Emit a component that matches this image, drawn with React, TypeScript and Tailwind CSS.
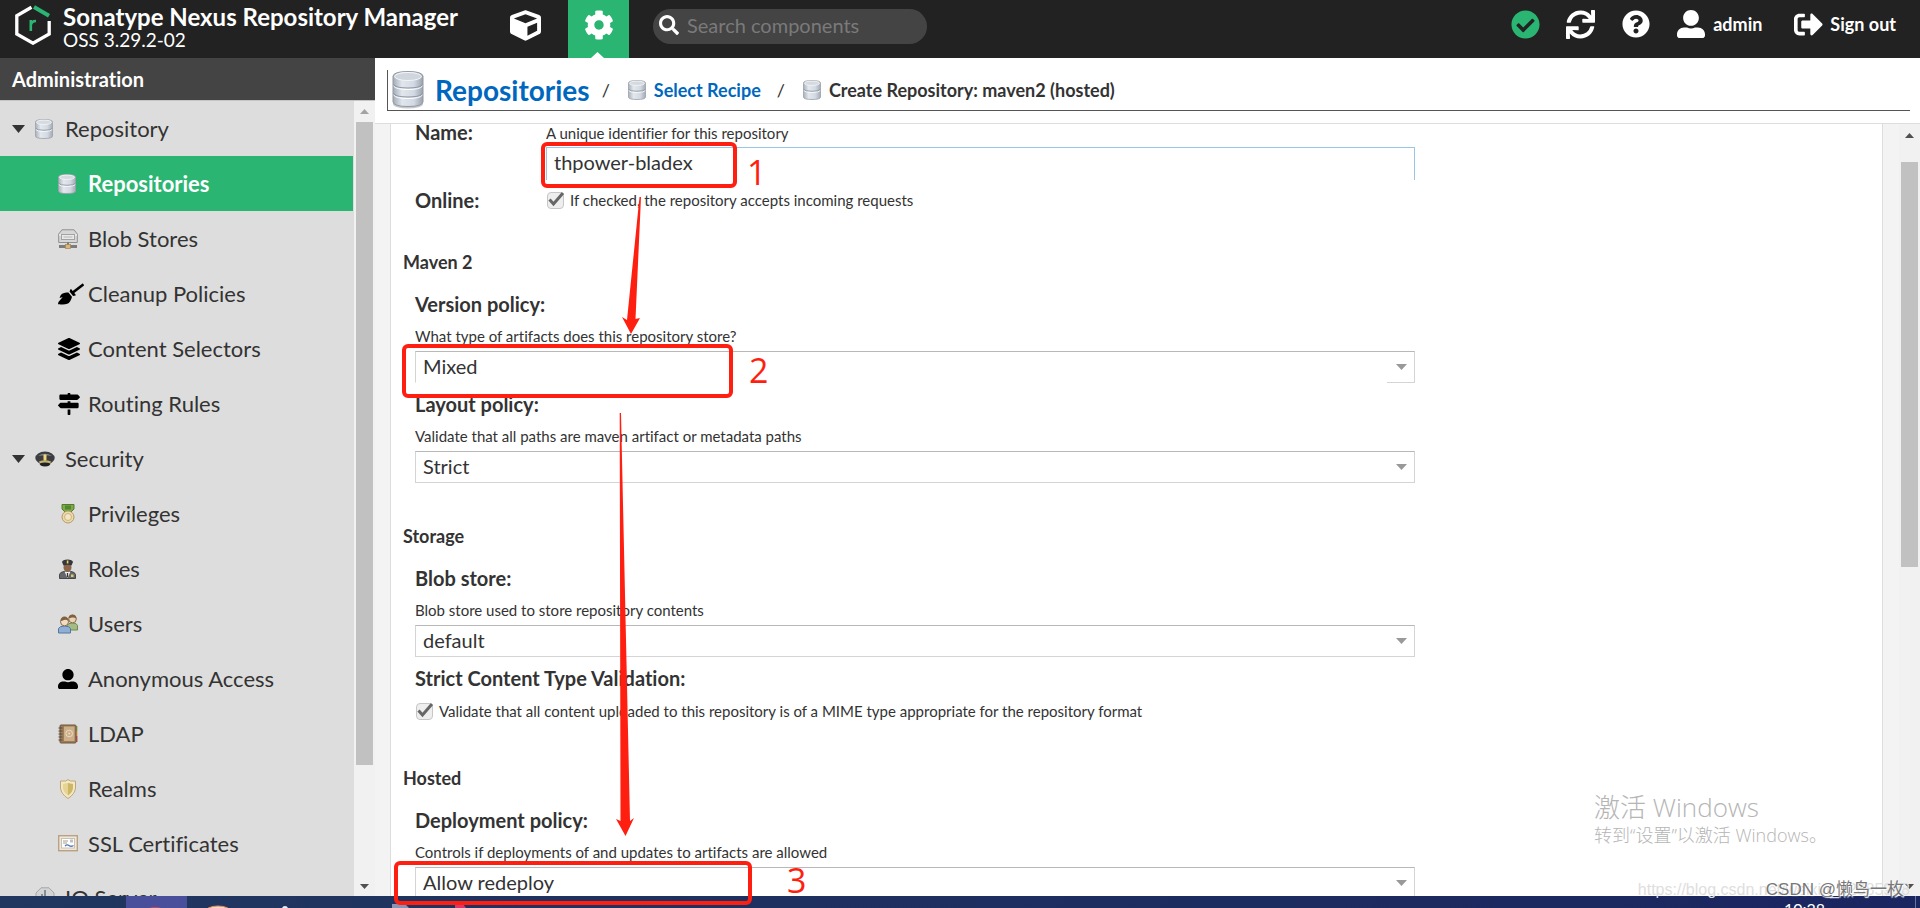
import { useId, useState } from "react";
import type { ReactNode } from "react";
import {
    FaBroom,
    FaCheckCircle,
    FaCog,
    FaCube,
    FaLayerGroup,
    FaMapSigns,
    FaQuestionCircle,
    FaSearch,
    FaSignOutAlt,
    FaSync,
    FaUserAlt,
} from "react-icons/fa";

/* ---------- Icons ---------- */

function DiskIcon({ className }: { className: string }) {
    const id = useId();
    return (
        <svg viewBox="0 0 18 20" className={className} preserveAspectRatio="none" aria-hidden="true">
            <defs>
                <linearGradient id={id} x1="0" x2="1" y1="0" y2="0">
                    <stop offset="0" stopColor="#a9b1bb" />
                    <stop offset="0.3" stopColor="#e3e8ee" />
                    <stop offset="0.7" stopColor="#d3d9e2" />
                    <stop offset="1" stopColor="#a4abb5" />
                </linearGradient>
            </defs>
            <path d="M.5 3Q.5.5 9 .5T17.500 3V17Q17.500 19.500 9 19.500T.5 17Z" fill={`url(#${id})`} stroke="#9ba1a9" strokeWidth="0.8" />
            <path d="M.8 9.500Q2 11.300 9 11.300T17.200 9.500" fill="none" stroke="#8f98a3" />
            <path d="M.8 10.700Q2 12.400 9 12.400T17.200 10.700" fill="none" stroke="#fff" strokeWidth="0.8" />
            <ellipse cx="9" cy="3.300" rx="7.600" ry="2.200" fill="#d5dae0" stroke="#f4f6f8" strokeWidth="0.8" />
        </svg>
    );
}

function BigDiskIcon({ className }: { className: string }) {
    const id = useId();
    return (
        <svg viewBox="0 0 32 38" className={className} aria-hidden="true">
            <defs>
                <linearGradient id={id} x1="0" x2="1" y1="0" y2="0">
                    <stop offset="0" stopColor="#a2abb8" />
                    <stop offset="0.3" stopColor="#e2e6ed" />
                    <stop offset="0.7" stopColor="#d3d9e3" />
                    <stop offset="1" stopColor="#99a1ad" />
                </linearGradient>
            </defs>
            <ellipse cx="16" cy="33" rx="15" ry="4.500" fill="#c9c9c9" />
            <path d="M1 5Q2 .5 16 .5T31 5V31Q30 35.500 16 35.500T1 31Z" fill={`url(#${id})`} stroke="#9299a3" />
            <path d="M1.500 13.500Q4 17 16 17T30.500 13.500M1.500 22.500Q4 26 16 26T30.500 22.500" fill="none" stroke="#8d96a3" strokeWidth="1.200" />
            <path d="M1.500 15Q4 18.500 16 18.500T30.500 15M1.500 24Q4 27.500 16 27.500T30.500 24" fill="none" stroke="#fff" />
            <ellipse cx="16" cy="5.500" rx="13.500" ry="4" fill="#cfd6dd" stroke="#f3f5f7" />
        </svg>
    );
}

function BlobIcon() {
    return (
        <svg viewBox="0 0 20 20" className="size-5" aria-hidden="true">
            <path d="M4 .8H16L19.300 5V13.500H.7V5Z" fill="#d6d6d6" stroke="#909090" />
            <path d="M1 6H19" stroke="#fff" />
            <rect x="3.500" y="5.500" width="13" height="5" fill="#e9e9e9" stroke="#a2a2a2" />
            <path d="M5.500 8H14.500" stroke="#b5b5b5" />
            <path d="M10 13.500V17" stroke="#777" strokeWidth="2" />
            <path d="M1 17.500H19" stroke="#7c7c7c" strokeWidth="3" />
            <rect x="7.500" y="15.500" width="5" height="4" fill="#d9b77c" stroke="#a48350" strokeWidth="0.7" />
        </svg>
    );
}

function CapIcon() {
    return (
        <svg viewBox="0 0 20 16" className="w-5 h-4" aria-hidden="true">
            <ellipse cx="10" cy="7" rx="9.700" ry="6.500" fill="#3c3d40" />
            <path d="M3 5Q10 .5 17 5Q10 3.500 3 5" fill="#8b8b8b" />
            <path d="M4 10.500Q10 8 16 10.500L15 13Q10 11 5 13Z" fill="#c5b372" />
            <path d="M4.500 12.500Q10 10.500 15.500 12.500Q15 15.500 10 15.500T4.500 12.500" fill="#222" />
            <rect x="8.500" y="3.500" width="3" height="6" rx="1" fill="#f0d878" />
        </svg>
    );
}

function MedalIcon() {
    return (
        <svg viewBox="0 0 20 20" className="size-5" aria-hidden="true">
            <path d="M4 .5H16V5L13 8H7L4 5Z" fill="#7fa84a" stroke="#557a2b" />
            <rect x="7" y="1.500" width="6" height="4" fill="#4c8a2c" />
            <circle cx="10" cy="13" r="6" fill="#ead9ad" stroke="#b89a66" />
            <circle cx="10" cy="13" r="3.500" fill="#f3e6c3" stroke="#cdb37d" />
        </svg>
    );
}

function RoleIcon() {
    return (
        <svg viewBox="0 0 20 20" className="size-5" aria-hidden="true">
            <path d="M1.500 19.500V15.500Q2 13 6 12.500H13Q17 13 17.500 15.500V19.500Z" fill="#65676b" stroke="#46474a" />
            <path d="M6.500 12.500 9.500 19 12.500 12.500Z" fill="#f0f0f0" />
            <path d="M8.800 14H10.200L10 18H9Z" fill="#333" />
            <ellipse cx="9.500" cy="8.500" rx="4" ry="4.500" fill="#8a6549" />
            <path d="M4 3Q4.500.5 9.500.5T15 3L13.500 6.500Q9.500 5 5.500 6.500Z" fill="#35373b" />
            <rect x="8.800" y="1.500" width="1.600" height="3" fill="#e8cf66" />
            <rect x="13" y="15.500" width="2.500" height="2.500" fill="#e5c95b" />
        </svg>
    );
}

function UsersIcon() {
    return (
        <svg viewBox="0 0 20 20" className="size-5" aria-hidden="true">
            <path d="M9 16V11.500Q10 9 14.500 9T19.500 11.500V16Z" fill="#a3bb85" stroke="#6f8a50" />
            <circle cx="14.500" cy="5" r="3.800" fill="#ecd3b5" stroke="#8b6c4d" />
            <path d="M10.500 4Q11 .5 14.500.5T18.500 4.500Q16 3 14 3.500T10.500 4" fill="#80603f" />
            <path d="M.5 19V14.500Q1.500 12 6.500 12T12.500 14.500V19Z" fill="#8fb0d4" stroke="#5577a0" />
            <circle cx="6.500" cy="7.800" r="4" fill="#f2dcc2" stroke="#8b6c4d" />
            <path d="M2.500 7Q3 2.500 6.500 2.500T10.800 7Q8 5 6 6T2.500 7" fill="#80603f" />
        </svg>
    );
}

function BookIcon() {
    return (
        <svg viewBox="0 0 20 20" className="size-5" aria-hidden="true">
            <rect x="17" y="2" width="2.500" height="5" fill="#8bab5c" />
            <rect x="17" y="7" width="2.500" height="5" fill="#e0a05a" />
            <rect x="17" y="12" width="2.500" height="6" fill="#b8564a" />
            <rect x="2" y="1" width="16" height="18" rx="1" fill="#9b7d5c" stroke="#705539" />
            <rect x="6" y="2.500" width="10.500" height="14.500" fill="#cdb08a" />
            <circle cx="11.200" cy="9.500" r="3.300" fill="none" stroke="#eadcc3" />
            <circle cx="11.200" cy="9.500" r="1" fill="#eadcc3" />
            <path d="M.5 4H4.500M.5 7H4.500M.5 10H4.500M.5 13H4.500M.5 16H4.500" stroke="#5b4a38" />
        </svg>
    );
}

function ShieldIcon() {
    return (
        <svg viewBox="0 0 20 20" className="size-5" aria-hidden="true">
            <path d="M10 .6 12.500 2H17.500V9Q17 15 10 19.500Q3 15 2.500 9V2H7.500Z" fill="#f3e8c4" stroke="#bfa677" />
            <path d="M10 4V16.500Q5 13 5 8.500V5Z" fill="#e5d493" />
            <path d="M10 4V16.500Q15 13 15 8.500V5Z" fill="#cdb766" />
        </svg>
    );
}

function CertificateIcon() {
    return (
        <svg viewBox="0 0 20 17" className="w-5 h-[17px]" aria-hidden="true">
            <rect x="0.700" y="0.700" width="18.600" height="15" fill="#efe8da" stroke="#b9a283" strokeWidth="1.400" />
            <rect x="3.500" y="3.500" width="13" height="9.500" fill="#fff" stroke="#c9c2b2" />
            <path d="M5 6H10M5 8H9" stroke="#a59e90" />
            <rect x="12" y="4.500" width="3" height="3" fill="#b9c2c9" />
            <path d="M7 11Q9 9 11 10.500T15.500 10.500" fill="none" stroke="#5a75b5" strokeWidth="1.300" />
        </svg>
    );
}

function ServerIcon() {
    return (
        <svg viewBox="0 0 20 20" className="size-5" aria-hidden="true">
            <path d="M6 .8H14L19 6V14L14 19H6L1 14V6Z" fill="#d2d4d6" stroke="#a4a6a8" />
            <path d="M10 3V15M7 7V15" stroke="#8a8d90" strokeWidth="2" />
        </svg>
    );
}

function Logo() {
    return (
        <svg viewBox="0 0 36 40" className="w-9 h-10 shrink-0" aria-hidden="true">
            <path d="M16.500 2.300 1.800 10.800V29L18 38.200 34.200 29V16" fill="none" stroke="#fff" strokeWidth="3.300" />
            <path d="M19 2 34 10.800" stroke="#2ab573" strokeWidth="4" />
            <path d="M15.800 26V15M15.800 20Q16.500 16 21 16" fill="none" stroke="#2ab573" strokeWidth="2.600" />
        </svg>
    );
}

/* ---------- Sidebar ---------- */

type NavItem = { label: string; icon: ReactNode; active?: boolean };

const navGroups: { label: string; icon: ReactNode; items: NavItem[] }[] = [
    {
        label: "Repository",
        icon: <DiskIcon className="w-[18px] h-5" />,
        items: [
            { label: "Repositories", icon: <DiskIcon className="w-[18px] h-5" />, active: true },
            { label: "Blob Stores", icon: <BlobIcon /> },
            { label: "Cleanup Policies", icon: <FaBroom size={26} className="shrink-0 text-black" /> },
            { label: "Content Selectors", icon: <FaLayerGroup size={22} className="shrink-0 text-black" /> },
            { label: "Routing Rules", icon: <FaMapSigns size={22} className="shrink-0 text-black" /> },
        ],
    },
    {
        label: "Security",
        icon: <CapIcon />,
        items: [
            { label: "Privileges", icon: <MedalIcon /> },
            { label: "Roles", icon: <RoleIcon /> },
            { label: "Users", icon: <UsersIcon /> },
            { label: "Anonymous Access", icon: <FaUserAlt size={20} className="text-black" /> },
            { label: "LDAP", icon: <BookIcon /> },
            { label: "Realms", icon: <ShieldIcon /> },
            { label: "SSL Certificates", icon: <CertificateIcon /> },
        ],
    },
    { label: "IQ Server", icon: <ServerIcon />, items: [] },
];

function Triangle({ up, className }: { up?: boolean; className: string }) {
    return (
        <svg viewBox="0 0 10 6" preserveAspectRatio="none" className={className} aria-hidden="true">
            <path d={up ? "M0 6 5 0 10 6Z" : "M0 0H10L5 6Z"} fill="currentColor" />
        </svg>
    );
}

function Sidebar() {
    return (
        <aside className="w-[375px] shrink-0 flex flex-col bg-[#ddd]">
            <h2 className="h-[42px] shrink-0 flex items-center px-3 bg-[#444] text-white text-[20px] font-bold">Administration</h2>
            <div className="flex-1 min-h-0 flex border-t border-[#c4c4c4]">
                <nav className="flex-1 overflow-hidden text-[22px] text-[#333]">
                    {navGroups.map((group) => (
                        <div key={group.label}>
                            <a href="#" className={group.items.length > 0 ? "h-[55px] pl-3 flex items-center" : "h-[52px] pl-3 flex items-center"}>
                                {group.items.length > 0 ? <Triangle className="w-[13px] h-2" /> : <span className="w-[13px]" />}
                                <span className="w-10 pl-[10px] flex items-center">{group.icon}</span>
                                {group.label}
                            </a>
                            {group.items.map((item) => (
                                <a
                                    key={item.label}
                                    href="#"
                                    className={
                                        item.active
                                            ? "h-[55px] mr-px pl-[58px] flex items-center bg-[#2ab573] text-white font-bold"
                                            : "h-[55px] pl-[58px] flex items-center"
                                    }
                                >
                                    <span className="w-[30px] shrink-0 flex items-center">{item.icon}</span>
                                    {item.label}
                                </a>
                            ))}
                        </div>
                    ))}
                </nav>
                <div className="w-[21px] shrink-0 flex flex-col items-center bg-[#f1f1f1]" aria-hidden="true">
                    <div className="h-[21px] flex items-center"><Triangle up className="w-[9px] h-[5px] text-[#a3a3a3]" /></div>
                    <div className="w-[17px] h-[643px] bg-[#c1c1c1]" />
                    <div className="mt-auto h-5 flex items-center"><Triangle className="w-[9px] h-[5px] text-[#505050]" /></div>
                </div>
            </div>
        </aside>
    );
}

/* ---------- Header ---------- */

function Header() {
    return (
        <header className="h-[58px] shrink-0 flex bg-[#222] text-white">
            <div className="w-[490px] pl-[15px] pt-[5px] flex gap-3">
                <Logo />
                <div>
                    <h1 className="text-[24px] leading-6 font-bold whitespace-nowrap">Sonatype Nexus Repository Manager</h1>
                    <p className="text-[19px] leading-[22px]">OSS 3.29.2-02</p>
                </div>
            </div>
            <button type="button" aria-label="Browse" className="w-[78px] pl-5 pb-2 flex items-center"><FaCube size={31} /></button>
            <button type="button" aria-label="Administration" className="relative w-[61px] pb-[9px] flex items-center justify-center bg-[#2ab573]">
                <FaCog size={30} />
                <Triangle up className="absolute bottom-0 left-[23px] w-[13px] h-[6px]" />
            </button>
            <label className="ml-6 mt-[9px] w-[274px] h-[35px] pl-[6px] pb-1 flex items-center gap-2 rounded-full bg-[#444]">
                <FaSearch size={20} className="shrink-0" />
                <input type="search" aria-label="Search components" placeholder="Search components" className="w-full min-w-0 bg-transparent text-[20px] outline-none placeholder:text-[#7a7a7a]" />
            </label>
            <div className="ml-auto h-12 pr-6 flex items-center text-[18px] font-bold whitespace-nowrap">
                <button type="button" aria-label="System status" className="mr-[26px] text-[#2ab573]"><FaCheckCircle size={29} /></button>
                <button type="button" aria-label="Refresh" className="mr-[27px]"><FaSync size={29} /></button>
                <button type="button" aria-label="Help" className="mr-[27px]"><FaQuestionCircle size={28} /></button>
                <button type="button" className="mr-8 flex items-center gap-2"><FaUserAlt size={28} />admin</button>
                <button type="button" className="flex items-center gap-[7px]"><FaSignOutAlt size={29} />Sign out</button>
            </div>
        </header>
    );
}

/* ---------- Form ---------- */

function Breadcrumb() {
    return (
        <div className="h-[66px] shrink-0 pt-3 pl-3 pr-[10px] bg-white border-b border-[#ddd]">
            <nav className="h-[41px] pl-1 flex items-center border-l border-b border-[#555] text-[18px] font-bold">
                <BigDiskIcon className="w-8 h-[38px]" />
                <a href="#" className="ml-[11px] text-[28px] text-[#0067bf]">Repositories</a>
                <span className="ml-3 mr-[18px] font-normal">/</span>
                <DiskIcon className="w-[18px] h-5" />
                <a href="#" className="ml-2 text-[#0067bf]">Select Recipe</a>
                <span className="ml-4 mr-[18px] font-normal">/</span>
                <DiskIcon className="w-[18px] h-5" />
                <span className="ml-2">Create Repository: maven2 (hosted)</span>
            </nav>
        </div>
    );
}

type SelectFieldProps = { id: string; label: string; help: string; options: string[]; openBottom?: boolean };

function SelectField({ id, label, help, options, openBottom }: SelectFieldProps) {
    return (
        <div className="ml-3">
            <label htmlFor={id} className="block leading-6 text-[20px] font-bold">{label}</label>
            <p className="mt-[10px] leading-5 text-[15px]">{help}</p>
            <div className="relative mt-[5px] h-8">
                <select
                    id={id}
                    className={
                        openBottom
                            ? "w-full h-8 pl-[7px] pr-8 pb-0.5 appearance-none bg-white text-[20px] leading-6 border border-[#d4d4d4] border-t-[#b8b8b8] border-b-transparent outline-none"
                            : "w-full h-8 pl-[7px] pr-8 pb-0.5 appearance-none bg-white text-[20px] leading-6 border border-[#d4d4d4] border-t-[#b8b8b8] outline-none"
                    }
                >
                    {options.map((o) => <option key={o}>{o}</option>)}
                </select>
                <span className="absolute right-0 bottom-0 w-7 h-8 flex items-center justify-center border-b border-[#d4d4d4] pointer-events-none">
                    <Triangle className="w-[11px] h-[6px] text-[#999]" />
                </span>
            </div>
        </div>
    );
}

function CheckField({ id, text }: { id: string; text: string }) {
    const [checked, setChecked] = useState(true);
    return (
        <label htmlFor={id} className="h-5 flex items-center gap-[5px] text-[15px]">
            <span className="relative size-[19px] shrink-0">
                <input
                    id={id}
                    type="checkbox"
                    checked={checked}
                    onChange={() => setChecked(!checked)}
                    className="block size-[17px] mt-px ml-px appearance-none rounded-sm border border-[#c6c6c6] bg-[#eee]"
                />
                {checked && (
                    <svg viewBox="0 0 19 19" className="absolute inset-0 size-[19px] pointer-events-none" aria-hidden="true">
                        <path d="M3.500 8.500 7.500 13 17 2" fill="none" stroke="#666" strokeWidth="3" />
                    </svg>
                )}
            </span>
            {text}
        </label>
    );
}

function RepositoryForm() {
    return (
        <form className="-mt-1 pl-3 w-full max-w-[1024px]">
            <div className="ml-3 flex">
                <label htmlFor="name" className="w-[131px] shrink-0 leading-6 text-[20px] font-bold">Name:</label>
                <div className="flex-1">
                    <p className="pt-[3px] leading-5 text-[15px]">A unique identifier for this repository</p>
                    <input
                        id="name"
                        type="text"
                        defaultValue="thpower-bladex"
                        className="mt-1 block w-full h-[33px] px-[7px] pb-1 bg-white text-[20px] border-x border-t border-[#97c6e6] outline-none"
                    />
                </div>
            </div>
            <div className="ml-3 mt-2 flex items-center">
                <span className="w-[131px] shrink-0 leading-6 text-[20px] font-bold">Online:</span>
                <CheckField id="online" text="If checked, the repository accepts incoming requests" />
            </div>

            <h3 className="mt-[38px] mb-[18px] leading-6 text-[18px] font-bold">Maven 2</h3>
            <div className="flex flex-col gap-[9px]">
                <SelectField id="version" label="Version policy:" help="What type of artifacts does this repository store?" options={["Mixed", "Release", "Snapshot"]} openBottom />
                <SelectField id="layout" label="Layout policy:" help="Validate that all paths are maven artifact or metadata paths" options={["Strict", "Permissive"]} />
            </div>

            <h3 className="mt-[41px] mb-[18px] leading-6 text-[18px] font-bold">Storage</h3>
            <SelectField id="blob" label="Blob store:" help="Blob store used to store repository contents" options={["default"]} />
            <div className="ml-3 mt-[9px]">
                <div className="mb-[11px] leading-6 text-[20px] font-bold">Strict Content Type Validation:</div>
                <CheckField id="strict" text="Validate that all content uploaded to this repository is of a MIME type appropriate for the repository format" />
            </div>

            <h3 className="mt-[45px] mb-[18px] leading-6 text-[18px] font-bold">Hosted</h3>
            <SelectField id="deployment" label="Deployment policy:" help="Controls if deployments of and updates to artifacts are allowed" options={["Allow redeploy", "Disable redeploy", "Read-only"]} />
        </form>
    );
}

function Taskbar() {
    return (
        <footer className="h-3 shrink-0 flex justify-between overflow-hidden bg-linear-to-r from-[#21375f] to-[#1b2560]">
            <svg width="480" height="12" aria-hidden="true">
                <rect x="126" width="61" height="12" fill="#4a4f9b" />
                <ellipse cx="155" cy="15" rx="9" ry="4" fill="#c0505a" />
                <ellipse cx="218" cy="16" rx="13" ry="6" fill="#f5d9c8" stroke="#e58a5a" />
                <circle cx="285" cy="13" r="3" fill="#e8edf5" />
                <path d="M392 12V8H405L409 12Z" fill="#8b93b5" />
                <path d="M455 12V7L463 8 466 12Z" fill="#d63a6a" />
            </svg>
            <div className="mr-1 pt-[5px] pr-[90px] border-r border-[#6a74a0] text-[16px] leading-4 text-white">10:28</div>
        </footer>
    );
}

/* Red marker boxes, arrows and numbers drawn over the page */
function Annotations() {
    return (
        <div className="absolute inset-0 pointer-events-none text-[#ff1f10] text-[34px] leading-9 font-['Open_Sans','Liberation_Sans',sans-serif]">
            <div className="absolute left-[541px] top-[142px] w-[196px] h-[46px] border-4 border-current rounded-md" />
            <div className="absolute left-[402px] top-[344px] w-[331px] h-[54px] border-4 border-current rounded-md" />
            <div className="absolute left-[394px] top-[861px] w-[358px] h-[44px] border-4 border-current rounded-md" />
            <svg width="800" height="900" className="absolute left-0 top-0" fill="currentColor" aria-hidden="true">
                <path d="M639.500 197H641L635.500 319 640 318 631 334 622 317 627 320Z" />
                <path d="M619.700 413H621L630 821 634 818 625.500 836 616 819 620.500 821Z" />
            </svg>
            <span className="absolute left-[747px] top-[154px]">1</span>
            <span className="absolute left-[749px] top-[352px]">2</span>
            <span className="absolute left-[787px] top-[862px]">3</span>
        </div>
    );
}

function Watermarks() {
    return (
        <div className="absolute inset-0 overflow-hidden pointer-events-none whitespace-nowrap">
            <div className="absolute right-[90px] bottom-[61px] w-[236px] text-[#b5b5b5] font-['Open_Sans','Noto_Sans_CJK_SC',sans-serif] font-light">
                <p className="text-[26px] leading-8">激活 Windows</p>
                <p className="text-[18px] leading-6">转到“设置”以激活 Windows。</p>
            </div>
            <p className="absolute right-[10px] bottom-2 text-[16px] leading-5 text-[#dedede] font-['Liberation_Sans',sans-serif]">https://blog.csdn.net/weixin_42685988</p>
            <p className="absolute right-4 bottom-2 text-[17px] leading-5 text-[#777] font-['Liberation_Sans','Noto_Sans_CJK_SC',sans-serif] [text-shadow:1px_1px_1px_#fff]">CSDN @懒鸟一枚</p>
        </div>
    );
}

export default function App() {
    return (
        <div className="relative h-screen flex flex-col overflow-hidden bg-white text-[#333] font-['Lato','Liberation_Sans',sans-serif] [font-variant-ligatures:none]">
            <Header />
            <div className="flex-1 min-h-0 flex">
                <Sidebar />
                <main className="flex-1 min-w-0 flex flex-col">
                    <Breadcrumb />
                    <div className="flex-1 min-h-0 flex bg-[#f3f3f3]">
                        <div className="flex-1 min-w-0 ml-[15px] mr-4 overflow-hidden bg-white border-x border-[#ddd]">
                            <RepositoryForm />
                        </div>
                        <div className="w-[21px] shrink-0 flex flex-col items-center bg-[#f1f1f1]" aria-hidden="true">
                            <div className="h-[38px] pt-[9px]"><Triangle up className="w-[9px] h-[5px] text-[#505050]" /></div>
                            <div className="w-[17px] h-[405px] bg-[#c1c1c1]" />
                            <div className="mt-auto h-5 flex items-center"><Triangle className="w-[9px] h-[5px] text-[#505050]" /></div>
                        </div>
                    </div>
                </main>
            </div>
            <Taskbar />
            <Watermarks />
            <Annotations />
        </div>
    );
}
